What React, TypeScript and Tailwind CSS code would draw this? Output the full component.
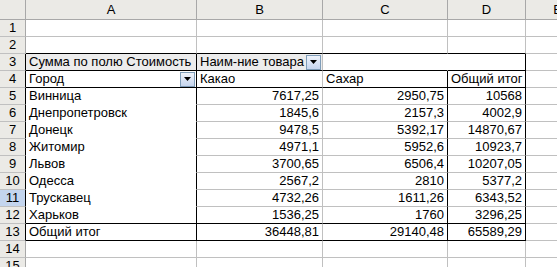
import React from "react";

type Edge = "g" | "k" | "n";

const RIGHT: Record<Edge, string> = {
  g: "border-r-[#c0c0c0]",
  k: "border-r-black",
  n: "border-r-white",
};
const BOTTOM: Record<Edge, string> = {
  g: "border-b-[#c0c0c0]",
  k: "border-b-black",
  n: "border-b-white",
};

function DropButton() {
  return (
    <span className="ml-auto mr-[1px] flex h-[15px] w-[15px] items-center justify-center border border-[#7f9db9] bg-gradient-to-b from-[#eef3fb] to-[#c6d5ee]">
      <svg width="7" height="4" viewBox="0 0 7 4">
        <path d="M0 0H7L3.5 4Z" fill="#000" />
      </svg>
    </span>
  );
}

type CellProps = {
  r?: Edge;
  b?: Edge;
  bg?: string;
  align?: "left" | "right";
  children?: React.ReactNode;
};

function Cell({ r = "g", b = "g", bg = "bg-white", align = "left", children }: CellProps) {
  return (
    <div
      className={`flex h-full items-end overflow-visible whitespace-nowrap border-r border-b pb-[1px] ${RIGHT[r]} ${BOTTOM[b]} ${bg} ${
        align === "right" ? "justify-end pr-[3px]" : "pl-[3px]"
      }`}
    >
      {children}
    </div>
  );
}

function RowHead({ n, dark, active }: { n: number; dark?: boolean; active?: boolean }) {
  return (
    <div
      className={`flex h-full items-end justify-center border-r border-b border-b-[#c0c0c0] pb-[1px] ${
        dark ? "border-r-black" : "border-r-[#a8a8a8]"
      } ${active ? "bg-[#c4d5ee]" : "bg-[#ebeae6]"}`}
    >
      {n}
    </div>
  );
}

function ColHead({ label }: { label?: string }) {
  return (
    <div className="flex h-full items-end justify-center border-r border-b border-r-[#a8a8a8] border-b-[#a8a8a8] bg-[#ebeae6] pb-[2px]">
      {label}
    </div>
  );
}

const rows: [string, string, string, string][] = [
  ["Винница", "7617,25", "2950,75", "10568"],
  ["Днепропетровск", "1845,6", "2157,3", "4002,9"],
  ["Донецк", "9478,5", "5392,17", "14870,67"],
  ["Житомир", "4971,1", "5952,6", "10923,7"],
  ["Львов", "3700,65", "6506,4", "10207,05"],
  ["Одесса", "2567,2", "2810", "5377,2"],
  ["Трускавец", "4732,26", "1611,26", "6343,52"],
  ["Харьков", "1536,25", "1760", "3296,25"],
];

function EmptyRow({ n, lastBlack }: { n: number; lastBlack?: boolean }) {
  const b: Edge = lastBlack ? "k" : "g";
  return (
    <>
      <RowHead n={n} />
      <Cell b={b} />
      <Cell b={b} />
      <Cell b={b} />
      <Cell b={b} />
      <Cell />
    </>
  );
}

export default function App() {
  return (
    <div
      className="h-[267px] w-[557px] overflow-hidden bg-white text-[13px] leading-[15px] text-black"
      style={{ fontFamily: '"Liberation Sans", Arial, sans-serif' }}
    >
      <div className="grid grid-cols-[26px_171px_126px_125px_78px_64px] grid-rows-[20px_repeat(15,17px)]">
        {/* column headers */}
        <ColHead />
        <ColHead label="A" />
        <ColHead label="B" />
        <ColHead label="C" />
        <ColHead label="D" />
        <ColHead label="E" />

        <EmptyRow n={1} />
        <EmptyRow n={2} lastBlack />

        {/* row 3: page / column field area */}
        <RowHead n={3} dark />
        <Cell r="k" b="k" bg="bg-[#ececec]">
          Сумма по полю Стоимость
        </Cell>
        <div className="flex h-full items-center border-r border-b border-r-[#c0c0c0] border-b-black bg-[#ececec] pl-[3px]">
          <span className="self-end pb-[1px]">Наим-ние товара</span>
          <DropButton />
        </div>
        <Cell r="n" b="k" />
        <Cell r="k" b="k" />
        <Cell />

        {/* row 4: field headers */}
        <RowHead n={4} dark />
        <div className="flex h-full items-center border-r border-b border-r-black border-b-black bg-white pl-[3px]">
          <span className="self-end pb-[1px]">Город</span>
          <DropButton />
        </div>
        <Cell b="k">Какао</Cell>
        <Cell r="k" b="k">
          Сахар
        </Cell>
        <Cell r="k" b="k">
          Общий итог
        </Cell>
        <Cell />

        {/* data rows */}
        {rows.map(([city, a, s, t], i) => {
          const last = i === rows.length - 1;
          const b: Edge = last ? "k" : "g";
          return (
            <React.Fragment key={city}>
              <RowHead n={5 + i} dark active={i === 6} />
              <Cell r="k" b={last ? "k" : "n"}>
                {city}
              </Cell>
              <Cell b={b} align="right">
                {a}
              </Cell>
              <Cell r="k" b={b} align="right">
                {s}
              </Cell>
              <Cell r="k" b={b} align="right">
                {t}
              </Cell>
              <Cell />
            </React.Fragment>
          );
        })}

        {/* grand total */}
        <RowHead n={13} dark />
        <Cell r="k" b="k">
          Общий итог
        </Cell>
        <Cell b="k" align="right">
          36448,81
        </Cell>
        <Cell r="k" b="k" align="right">
          29140,48
        </Cell>
        <Cell r="k" b="k" align="right">
          65589,29
        </Cell>
        <Cell />

        <EmptyRow n={14} />
        <EmptyRow n={15} />
      </div>
    </div>
  );
}
